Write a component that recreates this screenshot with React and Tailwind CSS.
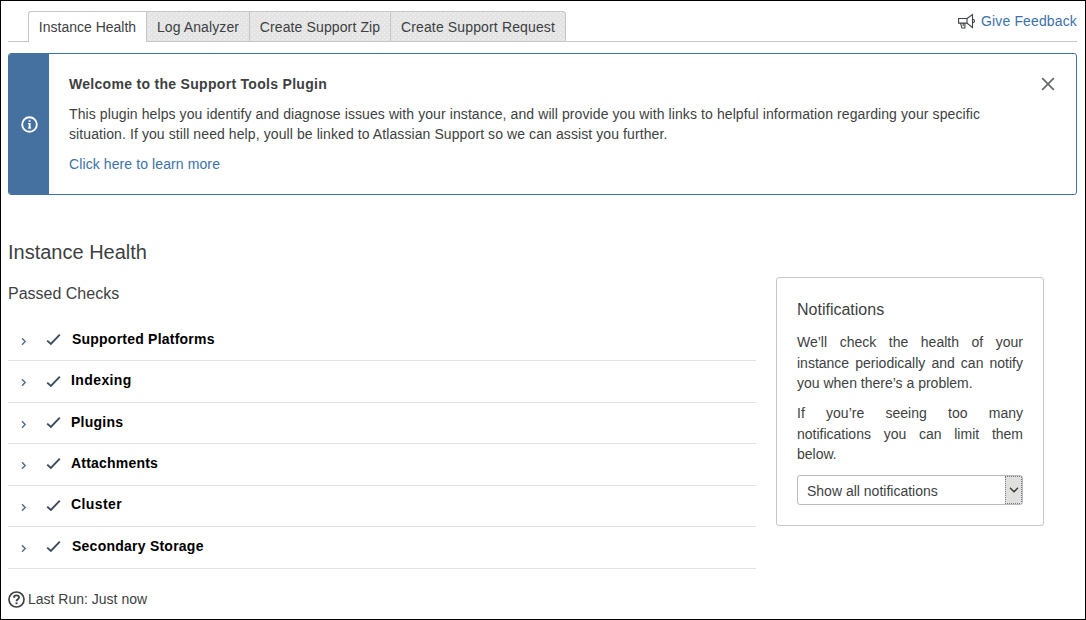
import React from "react";

const TABS = [
  { label: "Log Analyzer", box: "w-[103px] border-l tracking-[0.1px]" },
  { label: "Create Support Zip", box: "w-[141px] border-l tracking-[0.12px]" },
  { label: "Create Support Request", box: "w-[176px] border-x rounded-tr-[3px] tracking-[0.14px]" },
];

const CHECKS = [
  { name: "Supported Platforms", row: "h-[42px]", arrow: "mt-[18px]", tick: "mt-[14px]", text: "mt-[10px] pl-[11px] tracking-[0.22px]" },
  { name: "Indexing", row: "h-[42px]", arrow: "mt-[17px]", tick: "mt-[14px]", text: "mt-[9px] pl-[10px] tracking-[0.4px]" },
  { name: "Plugins", row: "h-[41px]", arrow: "mt-[17px]", tick: "mt-[13px]", text: "mt-[9px] pl-[10px] tracking-[0.25px]" },
  { name: "Attachments", row: "h-[42px]", arrow: "mt-[17px]", tick: "mt-[13px]", text: "mt-[9px] pl-[10px] tracking-[0.2px]" },
  { name: "Cluster", row: "h-[41px]", arrow: "mt-[17px]", tick: "mt-[13px]", text: "mt-[8px] pl-[10px] tracking-[0.4px]" },
  { name: "Secondary Storage", row: "h-[42px]", arrow: "mt-[17px]", tick: "mt-[13px]", text: "mt-[9px] pl-[11px] tracking-[0.24px]" },
];

const DITHER =
  "bg-[#e3e4e3] bg-[radial-gradient(circle,#f8f8f8_0.4px,transparent_0.7px),radial-gradient(circle,#f8f8f8_0.4px,transparent_0.7px)] bg-[length:5px_5px] bg-[position:0_0,2px_3px]";

function Megaphone() {
  return (
    <svg className="h-[17px] w-[18px]" viewBox="0 0 18 17" fill="none" stroke="#3f4347" strokeWidth="1.1">
      <path d="M.6 5.500h8.400v4.600H.6z" />
      <path d="M9 5.500 14.500 1.500v13L9 10.100" />
      <path d="M15 6.200c2 .4 2 3 0 3.400" />
      <path d="M2.500 10.100l1.400 4.900h3V10.300M5.200 10.100v3" />
    </svg>
  );
}

function CheckRow({ check }) {
  return (
    <li className={`flex border-b border-[#e2e3e4] ${check.row}`}>
      <svg className={`ml-[13px] h-[9px] w-[6px] ${check.arrow}`} viewBox="0 0 6 9" fill="none" stroke="#536b86" strokeWidth="1.4">
        <path d="M1 1.300 4.200 4.500 1 7.700" />
      </svg>
      <svg className={`ml-[19px] h-[13px] w-[15px] ${check.tick}`} viewBox="0 0 15 13" fill="none" stroke="#3c4c60" strokeWidth="1.9">
        <path d="M1.200 7.600 4.900 11 13.800 1.600" />
      </svg>
      <span className={`text-[14px] leading-[20px] font-bold text-black ${check.text}`}>{check.name}</span>
    </li>
  );
}

export default function App() {
  return (
    <div className="flex h-[620px] w-[1086px] flex-col overflow-hidden border border-black bg-white pr-[8px] pl-[7px] font-['Liberation_Sans',Arial,sans-serif] text-[14px] leading-[20px] text-[#3d3f42]">
      <header className="flex h-[41px] shrink-0 items-end">
        <div className="w-[20px] self-stretch border-b border-[#c4c7c9]" />
        <nav className="flex h-[31px]">
          <span className="flex w-[118px] justify-center rounded-tl-[3px] border-t border-l border-[#c4c7c9] pt-[5px] whitespace-nowrap">
            Instance Health
          </span>
          {TABS.map((tab) => (
            <span
              key={tab.label}
              className={`flex justify-center border-t border-b border-[#c4c7c9] pt-[5px] whitespace-nowrap ${tab.box} ${DITHER}`}
            >
              {tab.label}
            </span>
          ))}
        </nav>
        <div className="flex flex-1 justify-end self-stretch border-b border-[#c4c7c9] pt-[10px]">
          <div className="mt-[2px] mr-[5px]">
            <Megaphone />
          </div>
          <a className="tracking-[0.14px] whitespace-nowrap text-[#3c72a8]">Give Feedback</a>
        </div>
      </header>

      <section className="mt-[11px] flex h-[142px] shrink-0 overflow-hidden rounded-[3px] border border-[#4472a0]">
        <div className="flex w-[40px] items-center justify-center bg-[#44719f]">
          <svg className="h-[17px] w-[17px]" viewBox="0 0 17 17" fill="none">
            <circle cx="8.500" cy="8.500" r="7.300" stroke="#fff" strokeWidth="1.900" />
            <path d="M7 7.500h1.500M7 12h3.200" stroke="#fff" strokeWidth="1" />
            <path d="M8.600 7v5.500" stroke="#fff" strokeWidth="2" />
            <path d="M7.600 4.200h2v1.600h-2z" fill="#fff" />
          </svg>
        </div>
        <div className="flex-1 pt-[20px] pl-[20px]">
          <h2 className="font-bold tracking-[0.3px]">Welcome to the Support Tools Plugin</h2>
          <p className="mt-[10px] tracking-[0.092px] whitespace-nowrap">
            This plugin helps you identify and diagnose issues with your instance, and will provide you with links to
            helpful information regarding your specific
            <br />
            situation. If you still need help, youll be linked to Atlassian Support so we can assist you further.
          </p>
          <a className="mt-[10px] block tracking-[0.1px] text-[#3c72a8]">Click here to learn more</a>
        </div>
        <svg className="mt-[23px] mr-[21px] h-[14px] w-[14px]" viewBox="0 0 14 14" stroke="#66696c" strokeWidth="1.700">
          <path d="M1.200 1.200l11.600 11.600M12.800 1.200 1.200 12.800" />
        </svg>
      </section>

      <div className="flex">
        <main className="w-[748px]">
          <h1 className="mt-[45px] text-[20px] leading-[24px]">Instance Health</h1>
          <h2 className="mt-[20px] text-[16px] leading-[20px]">Passed Checks</h2>
          <ul className="mt-[15px]">
            {CHECKS.map((check) => (
              <CheckRow key={check.name} check={check} />
            ))}
          </ul>
          <div className="mt-[20px] flex items-center gap-[3px]">
            <svg className="h-[17px] w-[17px]" viewBox="0 0 17 17" fill="none" stroke="#3f4144">
              <circle cx="8.500" cy="8.500" r="7.500" strokeWidth="1.700" />
              <path d="M6 6.700C6 3.500 11 3.700 11 6.500 11 8.200 8.500 8.200 8.500 10.300" strokeWidth="1.900" />
              <path d="M8.500 11.400v1.800" strokeWidth="2" />
            </svg>
            <span>Last Run: Just now</span>
          </div>
        </main>

        <aside className="mt-[82px] ml-[20px] h-[249px] w-[268px] rounded-[3px] border border-[#c4c7c9] px-[20px] pt-[22px]">
          <h2 className="text-[16px] leading-[20px]">Notifications</h2>
          <p className="mt-[12px] w-[226px] text-justify leading-[20.600px]">
            We’ll check the health of your instance periodically and can notify you when there’s a problem.
          </p>
          <p className="mt-[9.200px] w-[226px] text-justify leading-[20.600px]">
            If you’re seeing too many notifications you can limit them below.
          </p>
          <div className="mt-[10px] flex h-[30px] w-[226px] overflow-hidden rounded-[3px] border border-[#b9bcbe]">
            <span className="flex-1 pt-[5px] pl-[9px]">Show all notifications</span>
            <span className="flex w-[17px] items-center justify-center border border-dotted border-[#77797b] bg-[#e0e0df]">
              <svg className="h-[6px] w-[10px]" viewBox="0 0 10 6" fill="none" stroke="#333" strokeWidth="1.300">
                <path d="M1 .8 5 4.800 9 .8" />
              </svg>
            </span>
          </div>
        </aside>
      </div>
    </div>
  );
}
